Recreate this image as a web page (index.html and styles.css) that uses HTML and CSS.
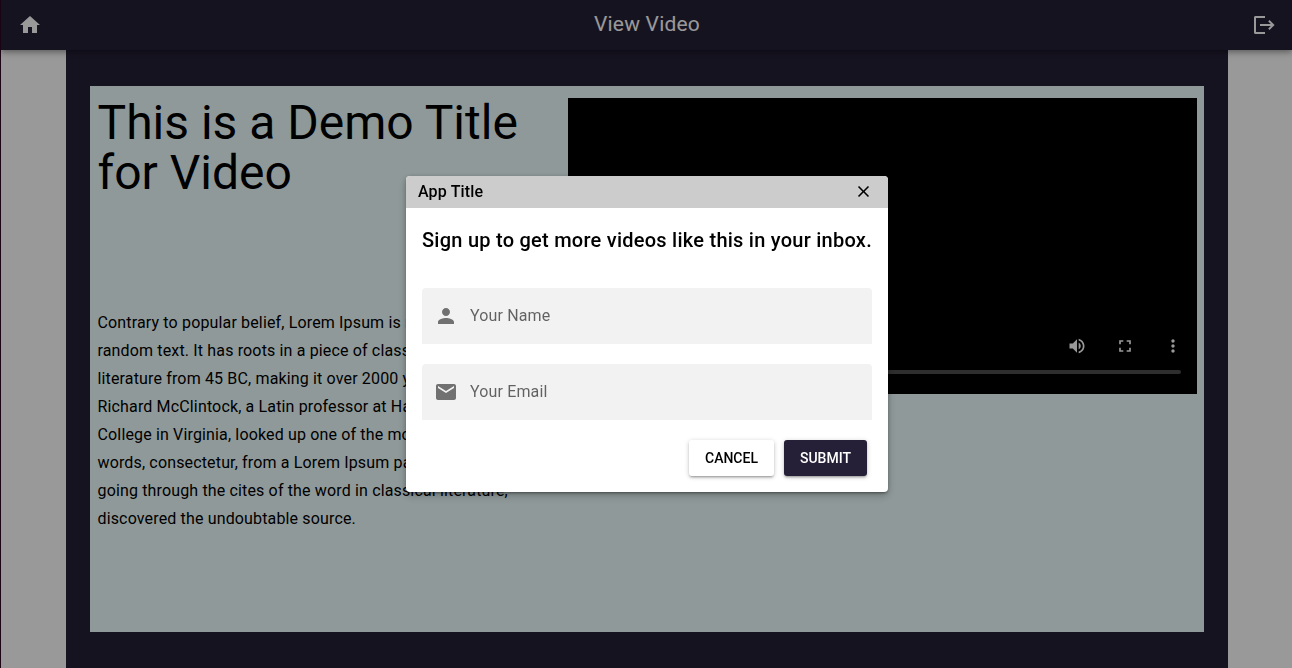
FILE: index.html
```html
<!DOCTYPE html>
<html lang="en">
<head>
<meta charset="utf-8">
<title>View Video</title>
<link rel="stylesheet" href="styles.css">
</head>
<body>
<div class="app">
  <header class="toolbar">
    <svg class="icon" viewBox="0 0 24 24"><path d="M10 20v-6h4v6h5v-8h3L12 3 2 12h3v8z"/></svg>
    <div class="toolbar-title">View Video</div>
    <svg class="icon" viewBox="0 0 24 24"><path d="M13 3H3.5C2.6 3 2 3.6 2 4.5v15c0 .9.6 1.5 1.5 1.5H13v-2H4V5h9zM17.6 7l-1.4 1.4 2.6 2.6H8v2h10.8l-2.6 2.6 1.4 1.4 5-5z"/></svg>
  </header>
  <main class="page">
    <section class="panel">
      <div class="copy">
        <h1 class="title">This is a Demo Title for Video</h1>
        <p class="description">Contrary to popular belief, Lorem Ipsum is not simply<br>
          random text. It has roots in a piece of classical Latin<br>
          literature from 45 BC, making it over 2000 years old.<br>
          Richard McClintock, a Latin professor at Hampden-Sydney<br>
          College in Virginia, looked up one of the more obscure Latin<br>
          words, consectetur, from a Lorem Ipsum passage, and<br>
          going through the cites of the word in classical literature,<br>
          discovered the undoubtable source.</p>
      </div>
      <div class="player">
        <div class="controls">
          <svg class="control" viewBox="0 0 24 24"><path d="M3 9v6h4l5 5V4L7 9H3zm13.5 3c0-1.77-1.02-3.29-2.5-4.03v8.05c1.48-.73 2.5-2.25 2.5-4.02zM14 3.23v2.06c2.89.86 5 3.54 5 6.71s-2.11 5.85-5 6.71v2.06c4.01-.91 7-4.49 7-8.77s-2.99-7.86-7-8.77z"/></svg>
          <svg class="control" viewBox="0 0 24 24"><path d="M7 14H5v5h5v-2H7v-3zm-2-4h2V7h3V5H5v5zm12 7h-3v2h5v-5h-2v3zM14 5v2h3v3h2V5h-5z"/></svg>
          <svg class="control" viewBox="0 0 24 24"><path d="M12 8c1.1 0 2-.9 2-2s-.9-2-2-2-2 .9-2 2 .9 2 2 2zm0 2c-1.1 0-2 .9-2 2s.9 2 2 2 2-.9 2-2-.9-2-2-2zm0 6c-1.1 0-2 .9-2 2s.9 2 2 2 2-.9 2-2-.9-2-2-2z"/></svg>
        </div>
        <div class="timeline"></div>
      </div>
    </section>
  </main>
</div>
<div class="backdrop">
  <form class="dialog">
    <div class="dialog-bar">
      <span>App Title</span>
      <svg class="close" viewBox="0 0 24 24"><path d="M19 6.41L17.59 5 12 10.59 6.41 5 5 6.41 10.59 12 5 17.59 6.41 19 12 13.41 17.59 19 19 17.59 13.41 12z"/></svg>
    </div>
    <div class="dialog-body">
      <h2 class="heading">Sign up to get more videos like this in your inbox.</h2>
      <label class="field">
        <svg class="field-icon" viewBox="0 0 24 24"><path d="M12 12c2.21 0 4-1.79 4-4s-1.79-4-4-4-4 1.79-4 4 1.79 4 4 4zm0 2c-2.67 0-8 1.34-8 4v2h16v-2c0-2.66-5.33-4-8-4z"/></svg>
        <span>Your Name</span>
      </label>
      <label class="field">
        <svg class="field-icon" viewBox="0 0 24 24"><path d="M20 4H4c-1.1 0-1.99.9-1.99 2L2 18c0 1.1.9 2 2 2h16c1.1 0 2-.9 2-2V6c0-1.1-.9-2-2-2zm0 4l-8 5-8-5V6l8 5 8-5v2z"/></svg>
        <span>Your Email</span>
      </label>
      <div class="actions">
        <button type="button" class="button">Cancel</button>
        <button type="button" class="button primary">Submit</button>
      </div>
    </div>
  </form>
</div>
</body>
</html>
```

FILE: styles.css
```css
* { box-sizing: border-box; }

body {
  margin: 0;
  height: 668px;
  overflow: hidden;
  font-family: Roboto, "Liberation Sans", sans-serif;
  font-size: 14px;
  color: #000;
  background: #fff;
}

.app {
  height: 668px;
  display: flex;
  flex-direction: column;
  border-left: 1px solid #300a24;
}

.toolbar {
  position: relative;
  z-index: 1;
  flex: none;
  height: 50px;
  padding: 0 16px 0 17px;
  display: flex;
  align-items: center;
  color: #fff;
  background: #262138;
  box-shadow: 0 2px 4px -1px rgba(0, 0, 0, .2), 0 4px 5px rgba(0, 0, 0, .14), 0 1px 10px rgba(0, 0, 0, .12);
}

.icon {
  width: 24px;
  height: 24px;
  fill: currentColor;
}

.toolbar-title {
  flex: 1;
  padding-bottom: 2px;
  text-align: center;
  font-size: 21px;
  letter-spacing: .01em;
}

.page {
  flex: 1;
  margin: 0 64px 0 65px;
  padding: 36px 24px;
  background: #262138;
}

.panel {
  height: 546px;
  padding: 12px 7px 0 7.5px;
  display: flex;
  justify-content: space-between;
  background: #efffff;
}

.copy { width: 448px; }

.title {
  margin: 0;
  height: 211px;
  font-size: 48px;
  font-weight: 400;
  line-height: 50px;
}

.description {
  margin: 0;
  font-size: 16px;
  line-height: 28px;
  letter-spacing: .00937em;
  white-space: nowrap;
}

.player {
  width: 629px;
  height: 296px;
  display: flex;
  flex-direction: column;
  justify-content: flex-end;
  padding: 0 16px 20px;
  background: #000;
}

.controls {
  display: flex;
  justify-content: flex-end;
  gap: 28px;
  margin: 0 -2px 14px 0;
}

.control {
  width: 20px;
  height: 20px;
  fill: #fff;
}

.timeline {
  height: 4px;
  border-radius: 2px;
  background: #4d4d4d;
}

.backdrop {
  position: fixed;
  inset: 0;
  z-index: 2;
  display: flex;
  align-items: center;
  justify-content: center;
  padding-left: 2px;
  background: rgba(0, 0, 0, .4);
}

.dialog {
  width: 482px;
  height: 316px;
  overflow: hidden;
  border-radius: 4px;
  background: #fff;
  box-shadow: 0 1px 5px rgba(0, 0, 0, .2), 0 2px 2px rgba(0, 0, 0, .14), 0 3px 1px -2px rgba(0, 0, 0, .12), 0 4px 10px rgba(0, 0, 0, .2);
}

.dialog-bar {
  height: 32px;
  padding: 0 15px 1px 12px;
  display: flex;
  align-items: center;
  justify-content: space-between;
  font-size: 16px;
  font-weight: 500;
  letter-spacing: .00937em;
  background: #ccc;
}

.close {
  width: 19px;
  height: 19px;
}

.dialog-body {
  padding: 16px;
}

.heading {
  margin: 0 0 32px;
  font-size: 20px;
  font-weight: 500;
  line-height: 32px;
  letter-spacing: .0125em;
  white-space: nowrap;
}

.field {
  height: 56px;
  margin-bottom: 20px;
  padding: 0 12px;
  display: flex;
  align-items: center;
  gap: 12px;
  border-radius: 4px 4px 0 0;
  font-size: 16px;
  letter-spacing: .00937em;
  color: rgba(0, 0, 0, .6);
  background: #f2f2f2;
}

.field span { padding-bottom: 2px; }

.field-icon {
  width: 24px;
  height: 24px;
  fill: #717171;
}

.actions {
  display: flex;
  justify-content: flex-end;
  gap: 10px;
  padding-right: 5px;
}

.button {
  height: 36px;
  padding: 0 16px;
  border: 0;
  border-radius: 3px;
  font: 500 14px/24px Roboto, sans-serif;
  text-transform: uppercase;
  color: #000;
  background: #fff;
  box-shadow: 0 1px 5px rgba(0, 0, 0, .2), 0 2px 2px rgba(0, 0, 0, .14), 0 3px 1px -2px rgba(0, 0, 0, .12);
}

.primary {
  color: #fff;
  background: #252037;
}
```
